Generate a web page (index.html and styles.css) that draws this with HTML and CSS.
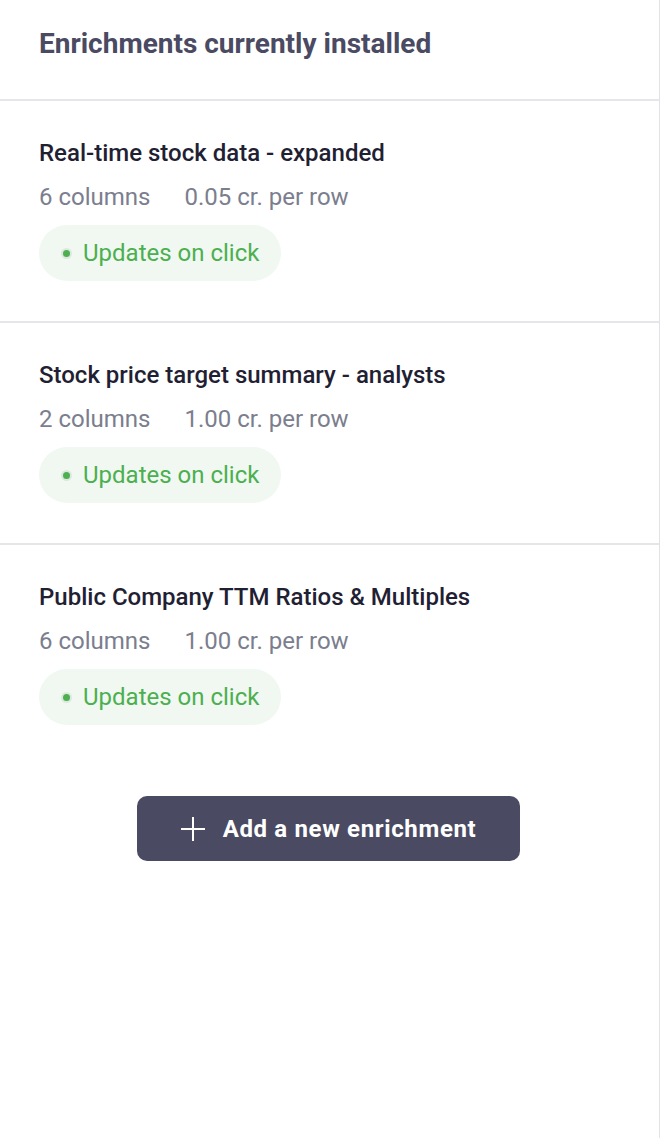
FILE: index.html
```html
<!DOCTYPE html>
<html lang="en">
<head>
    <meta charset="UTF-8">
    <meta name="viewport" content="width=device-width, initial-scale=1.0">
    <title>Enrichments</title>
    <link rel="stylesheet" href="styles.css">
</head>
<body>

    <div class="panel">
        <!-- Header -->
        <div class="panel-header">
            <h2>Enrichments currently installed</h2>
        </div>

        <!-- Installed enrichments -->
        <div class="enrichment">
            <div class="enrichment-title">Real-time stock data - expanded</div>
            <div class="enrichment-meta">
                <span>6 columns</span>
                <span>0.05 cr. per row</span>
            </div>
            <span class="status-pill"><span class="dot"></span>Updates on click</span>
        </div>

        <div class="enrichment">
            <div class="enrichment-title">Stock price target summary - analysts</div>
            <div class="enrichment-meta">
                <span>2 columns</span>
                <span>1.00 cr. per row</span>
            </div>
            <span class="status-pill"><span class="dot"></span>Updates on click</span>
        </div>

        <div class="enrichment last">
            <div class="enrichment-title">Public Company TTM Ratios &amp; Multiples</div>
            <div class="enrichment-meta">
                <span>6 columns</span>
                <span>1.00 cr. per row</span>
            </div>
            <span class="status-pill"><span class="dot"></span>Updates on click</span>
        </div>

        <div class="actions">
            <button type="button" class="add-btn">
                <svg width="26" height="26" viewBox="0 0 26 26" fill="none" stroke="#fff" stroke-width="2">
                    <line x1="13" y1="1" x2="13" y2="25"/>
                    <line x1="1" y1="13" x2="25" y2="13"/>
                </svg>
                Add a new enrichment
            </button>
        </div>
    </div>

</body>
</html>
```

FILE: styles.css
```css
body {
    margin: 0;
    font-family: Roboto, "Noto Sans", Arial, sans-serif;
    background-color: #fff;
}
.panel {
    width: 660px;
    min-height: 1138px;
    border-right: 1px solid #e2e2e4;
    box-sizing: border-box;
}
.panel-header {
    height: 101px;
    padding: 28px 39px 0;
    box-sizing: border-box;
    border-bottom: 2px solid #e4e6ea;
}
.panel-header h2 {
    margin: 0;
    font-size: 28px;
    line-height: 32px;
    font-weight: 700;
    color: #4a4a63;
}
.enrichment {
    padding: 38px 39px 40px;
    border-bottom: 2px solid #e4e6ea;
}
.enrichment.last {
    border-bottom: none;
}
.enrichment-title {
    font-size: 24px;
    line-height: 28px;
    font-weight: 500;
    color: #1f2133;
}
.enrichment-meta {
    margin-top: 16px;
    display: flex;
    gap: 34px;
    font-size: 24px;
    line-height: 28px;
    color: #7b7e8e;
}
.status-pill {
    margin-top: 14px;
    display: inline-flex;
    align-items: center;
    height: 56px;
    padding: 0 22px 0 24px;
    border-radius: 28px;
    background-color: #f0f8f1;
    color: #4caf50;
    font-size: 24px;
}
.status-pill .dot {
    width: 7px;
    height: 7px;
    border-radius: 50%;
    background-color: #4caf50;
    box-shadow: 0 0 0 2px #dde8de;
    margin-right: 13px;
}
.actions {
    display: flex;
    justify-content: center;
    padding-top: 31px;
}
.add-btn {
    width: 383px;
    height: 65px;
    margin-left: -3px;
    display: flex;
    align-items: center;
    justify-content: center;
    gap: 17px;
    border: none;
    border-radius: 10px;
    background-color: #4a4a63;
    color: #fff;
    font-family: inherit;
    font-size: 24px;
    font-weight: 700;
    letter-spacing: 0.65px;
}
```
